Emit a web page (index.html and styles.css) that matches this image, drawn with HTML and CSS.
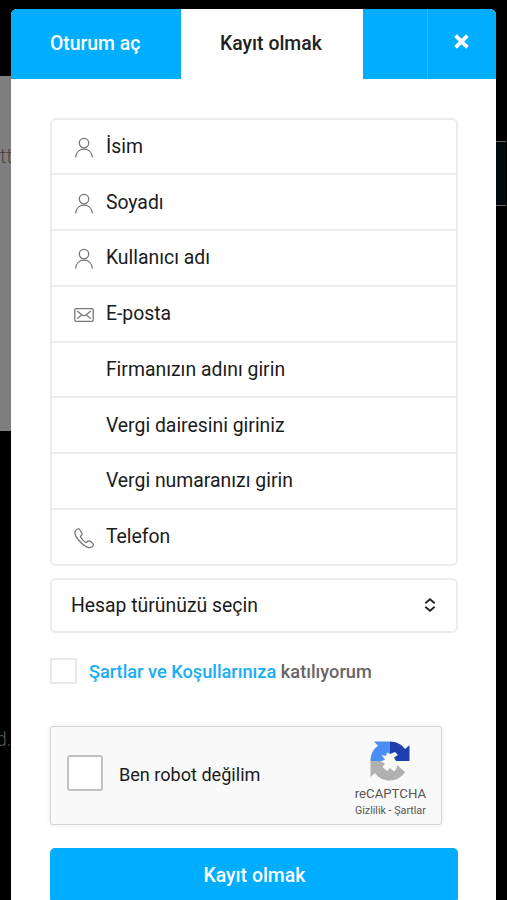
FILE: index.html
```html
<!DOCTYPE html>
<html lang="tr">
<head>
<meta charset="utf-8">
<title>Kayıt olmak</title>
<link rel="stylesheet" href="styles.css">
</head>
<body>
<svg class="defs" aria-hidden="true">
  <symbol id="user" viewBox="0 0 20 22"><circle cx="10" cy="6.1" r="4.7"/><path d="M1.6 20.5C2 15.2 5.5 12.2 10 12.2s8 3 8.400 8.300"/></symbol>
  <symbol id="mail" viewBox="0 0 20 22"><rect x=".8" y="4.700" width="18.400" height="12.600" rx="1"/><path d="M3.300 7l4.500 3.800Q10 12.600 12.200 10.800L16.700 7M3.300 14.500l4-3.200M16.700 14.500l-4-3.200"/></symbol>
  <symbol id="phone" viewBox="0 0 20 22"><path d="M1.200 4.300Q.4 6.700 2 9.400 6.300 16.800 13.300 20.200q2.600 1.100 4.800-.5 1.900-1.500 1-2.800-1.600-2.100-3.900-3-1.100-.3-2.200 1.100-.7.800-1.600.2-3-2-4.600-4.900-.5-.9.200-1.500 1.300-1.200.9-2.500Q7.100 4 5.200 2.100q-1.500-1.200-4 2.200z"/></symbol>
</svg>
<div class="backdrop">
  <span class="behind behind-top">tt</span>
  <span class="behind behind-low">d.</span>
  <span class="behind-box"></span>
</div>
<main class="modal">
  <nav class="tabs">
    <a class="tab">Oturum aç</a>
    <a class="tab active">Kayıt olmak</a>
    <span class="spacer"></span>
    <button class="close" aria-label="Kapat"><svg viewBox="0 0 14 14"><path d="M1.500 1.500l11 11M12.500 1.500l-11 11"/></svg></button>
  </nav>
  <form class="form">
    <div class="fields">
      <label class="field"><svg class="icon"><use href="#user"/></svg><span>İsim</span></label>
      <label class="field"><svg class="icon"><use href="#user"/></svg><span>Soyadı</span></label>
      <label class="field"><svg class="icon"><use href="#user"/></svg><span>Kullanıcı adı</span></label>
      <label class="field"><svg class="icon"><use href="#mail"/></svg><span>E-posta</span></label>
      <label class="field"><i class="icon"></i><span>Firmanızın adını girin</span></label>
      <label class="field"><i class="icon"></i><span>Vergi dairesini giriniz</span></label>
      <label class="field"><i class="icon"></i><span>Vergi numaranızı girin</span></label>
      <label class="field"><svg class="icon"><use href="#phone"/></svg><span>Telefon</span></label>
    </div>
    <div class="select"><span>Hesap türünüzü seçin</span><svg viewBox="0 0 12 14"><path d="M1.300 5.200L6 1.200l4.700 4M1.300 8.800l4.700 4 4.700-4"/></svg></div>
    <div class="terms"><span class="check"></span><p><a>Şartlar ve Koşullarınıza</a> katılıyorum</p></div>
    <div class="captcha">
      <span class="captcha-check"></span>
      <span class="captcha-label">Ben robot değilim</span>
      <div class="brand">
        <svg viewBox="0 0 40 40">
          <path fill="#b0b0b0" d="M.5 20v16l4.300-4C8.500 37 13.500 39.500 20 39.500c6 0 11.500-3 15-8.500l-8-7c0 3-1 5-3 6.500l-4-3.500-3 3-4.500-4 2.500-3.500L10 20z"/>
          <path fill="#4a8df5" d="M20 .5H4l4 4.300C3 8.500.5 14 .5 20H12l3-1.500-3.500-4.500 4.500 1 1-3.500 3 1.500z"/>
          <path fill="#1f3fae" d="M20 .5c6 0 11.500 2.700 15 7.500l4.500-3.800V20H26l-2-3.500 4-2.500-3-3-5 2z"/>
        </svg>
        <span class="name">reCAPTCHA</span>
        <span class="links">Gizlilik - Şartlar</span>
      </div>
    </div>
    <button class="submit" type="button">Kayıt olmak</button>
  </form>
</main>
</body>
</html>
```
FILE: styles.css
```css
* { box-sizing: border-box; }
body {
  margin: 0;
  height: 900px;
  overflow: hidden;
  background: #000;
  font-family: Roboto, sans-serif;
  font-size: 19.4px;
  color: #1b1b1b;
}
button { font: inherit; border: 0; padding: 0; }
.defs { display: none; }
.backdrop {
  position: absolute;
  inset: 0;
  overflow: hidden;
  background: linear-gradient(#000 76px, #7f7f7f 76px 431px, #000 431px);
}
.behind { position: absolute; line-height: 24px; }
.behind-top { left: 0; top: 145px; color: #444; font-weight: 300; }
.behind-low { left: -4px; top: 728px; color: #555; font-weight: 300; }
.backdrop::before {
  content: "";
  position: absolute;
  left: 496px;
  top: 0;
  width: 11px;
  height: 900px;
  background: #000;
}
.behind-box {
  position: absolute;
  left: 490px;
  top: 141px;
  width: 15.500px;
  height: 65px;
  background: #02090c;
  border: solid #666;
  border-width: 1px 0;
}
.modal {
  position: relative;
  width: 485px;
  height: 910px;
  margin: 9px 0 0 11.400px;
  background: #fff;
  border-radius: 6px 6px 0 0;
  overflow: hidden;
}
.tabs { display: flex; height: 69.500px; font-weight: 500; }
.tab {
  width: 169.5px;
  line-height: 69px;
  text-align: center;
  background: #00adff;
  color: #fff;
  padding-right: 2px;
}
.tab.active { width: 182px; background: #fff; color: #222; }
.spacer { flex: 1; background: #00adff; }
.close {
  width: 69.500px;
  display: flex;
  align-items: center;
  justify-content: center;
  background: #00adff;
  border-left: 1px solid #20b8ff;
  padding: 0 1px 5px 0;
}
.close svg { width: 15px; height: 15px; }
.close path { stroke: #fff; stroke-width: 3.500; fill: none; }
.form { padding: 39px 38px 0 39px; }
.fields { border: 2px solid #ebeced; border-radius: 6px; height: 448px; display: flex; flex-direction: column; }
.field {
  flex: 1;
  display: flex;
  align-items: center;
  gap: 11.500px;
  padding-left: 22px;
  border-bottom: 2px solid #ebeced;
}
.field:last-child { border-bottom: 0; }
.icon { width: 20px; height: 22px; margin-top: 3px; fill: none; stroke: #777; stroke-width: 1.300; }
.select {
  height: 55px;
  margin-top: 12px;
  padding: 0 20px 0 18.500px;
  border: 2px solid #ebeced;
  border-radius: 6px;
  display: flex;
  align-items: center;
  justify-content: space-between;
}
.select svg { width: 12px; height: 14px; fill: none; stroke: #222; stroke-width: 1.800; }
.terms { display: flex; align-items: center; gap: 12px; height: 27px; margin-top: 25px; font-size: 18.200px; font-weight: 500; color: #666; }
.terms p { margin: 0; white-space: nowrap; }
.terms a { color: #18adf5; }
.check { width: 26.500px; height: 26.500px; border: 2px solid #e7e8e8; }
.captcha {
  width: 392px;
  height: 99px;
  margin-top: 41px;
  padding-left: 16px;
  display: flex;
  align-items: center;
  background: #f9f9f9;
  border: 1px solid #d3d3d3;
  border-radius: 3px;
  box-shadow: 0 0 4px rgba(0,0,0,.1);
}
.captcha-check { width: 36px; height: 36px; margin-top: -5px; background: #fff; border: 2px solid #c1c1c1; border-radius: 3px; }
.captcha-label { margin: -2px 0 0 15.500px; font-size: 18.100px; }
.brand { width: 104px; margin: 0 -1px 0 auto; display: flex; flex-direction: column; align-items: center; color: #555; white-space: nowrap; padding-top: 9px; }
.brand svg { width: 40px; height: 40px; }
.name { font-size: 13.200px; line-height: 17px; margin-top: 4px; }
.links { font-size: 10.700px; line-height: 17px; }
.submit {
  display: block;
  width: 100%;
  height: 55px;
  margin-top: 23px;
  background: #00adff;
  border-radius: 5px;
  color: #fff;
  font-weight: 500;
}
```
